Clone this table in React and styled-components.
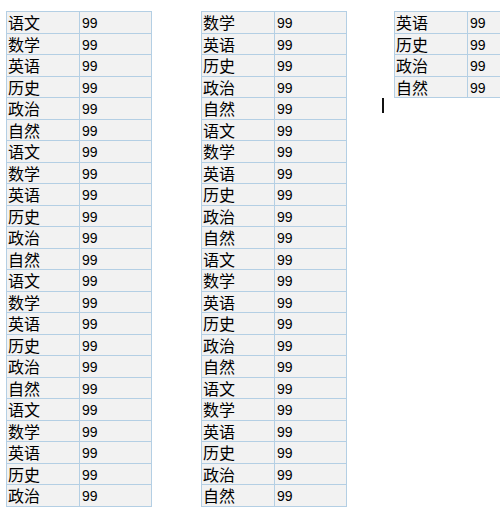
import React from "react";
import styled, { createGlobalStyle } from "styled-components";

const Global = createGlobalStyle`
  html, body { margin: 0; padding: 0; background: #ffffff; }
  body { width: 500px; height: 507px; overflow: hidden; }
`;

const Page = styled.div`
  display: flex;
  align-items: flex-start;
  padding: 11px 0 0 6px;
  font-family: "Noto Sans CJK SC", "Liberation Sans", sans-serif;
  color: #000;
`;

const Column = styled.div`
  display: flex;
  flex-direction: column;
  margin-left: ${(p) => p.$gap || 0}px;
`;

const Grid = styled.div`
  display: grid;
  grid-template-columns: 72px 71px;
  grid-auto-rows: 20.5px;
  gap: 1px;
  padding: 1px;
  background: #b4cfe4;
  width: max-content;
`;

const Subject = styled.div`
  background: #f2f2f2;
  font-size: 16px;
  line-height: 20px;
  padding-left: 1px;
  white-space: nowrap;
`;

const Score = styled.div`
  background: #f2f2f2;
  font-family: "Liberation Sans", sans-serif;
  font-size: 14px;
  line-height: 22px;
  padding-left: 2px;
  white-space: nowrap;
`;

const Caret = styled.div`
  width: 2px;
  height: 15px;
  background: #111;
  margin: 0 0 0 -12px;
`;

const cycle = ["语文", "数学", "英语", "历史", "政治", "自然"];
const make = (start, n) =>
  Array.from({ length: n }, (_, i) => cycle[(start + i) % cycle.length]);

const Table = ({ rows }) => (
  <Grid>
    {rows.map((r, i) => (
      <React.Fragment key={i}>
        <Subject>{r}</Subject>
        <Score>99</Score>
      </React.Fragment>
    ))}
  </Grid>
);

export default function App() {
  return (
    <>
      <Global />
      <Page>
        <Column>
          <Table rows={make(0, 23)} />
        </Column>
        <Column $gap={49}>
          <Table rows={make(1, 23)} />
        </Column>
        <Column $gap={47}>
          <Table rows={make(2, 4)} />
          <Caret />
        </Column>
      </Page>
    </>
  );
}
